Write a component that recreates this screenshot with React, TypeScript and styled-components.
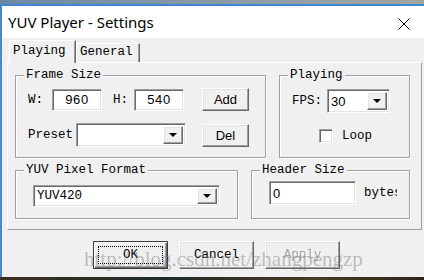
import React from "react";
import styled, { createGlobalStyle } from "styled-components";

const mono = `"Liberation Mono", "DejaVu Sans Mono", monospace`;
const sans = `"Liberation Sans", Arial, sans-serif`;

const Global = createGlobalStyle`
  html, body { margin: 0; padding: 0; }
  body { width: 424px; height: 280px; overflow: hidden; background: #2b2a22; }
`;

const Desktop = styled.div`
  position: relative;
  width: 424px;
  height: 280px;
  overflow: hidden;
  display: flex;
  flex-direction: column;
`;

const DesktopTop = styled.div`
  height: 4px;
  flex: none;
  background: linear-gradient(90deg, #6a88a6, #8c9ca8 55%, #a0a69e);
`;

const DesktopBottom = styled.div`
  height: 3px;
  flex: none;
  background: linear-gradient(90deg, #3a3122, #1f2926 40%, #4a3a22 75%, #2c2418);
`;

const Window = styled.div`
  box-sizing: border-box;
  width: 427px;
  height: 273px;
  flex: none;
  border-top: 2px solid #3f86cf;
  border-left: 2px solid #4d88c2;
  display: flex;
  flex-direction: column;
  background: #f0f0f0;
`;

const TitleBar = styled.div`
  height: 32px;
  flex: none;
  background: #fff;
  display: flex;
  align-items: center;
  justify-content: space-between;
`;

const Title = styled.span`
  padding-left: 6px;
  font: 15px "Noto Sans", "Open Sans", sans-serif;
  color: #000;
`;

const CloseBtn = styled.div`
  width: 46px;
  height: 32px;
  padding-top: 3px;
  box-sizing: border-box;
  display: flex;
  align-items: center;
  justify-content: center;
`;

const Client = styled.div`
  flex: 1;
  display: flex;
  flex-direction: column;
  padding: 2px 0 0 5px;
`;

const TabStrip = styled.div`
  display: flex;
  align-items: flex-end;
  height: 22px;
  padding-left: 2px;
  position: relative;
  z-index: 1;
`;

const Tab = styled.div<{ $active?: boolean; $w: number }>`
  box-sizing: border-box;
  width: ${(p) => p.$w}px;
  height: ${(p) => (p.$active ? 23 : 19)}px;
  margin-bottom: ${(p) => (p.$active ? -1 : 0)}px;
  background: #f0f0f0;
  border-top: 1px solid #fff;
  border-left: 1px solid #fff;
  border-right: 1px solid #696969;
  box-shadow: inset -1px 0 0 #a0a0a0;
  padding: ${(p) => (p.$active ? "2px" : "0")} 0 0 3px;
  font: 12.5px/16px ${mono};
  color: #000;
  white-space: nowrap;
`;

const Panel = styled.div`
  box-sizing: border-box;
  width: 415px;
  height: 168px;
  flex: none;
  border: 1px solid;
  border-color: #fff #a0a0a0 #a0a0a0 #fff;
  padding: 5px 0 0 7px;
  display: flex;
  flex-direction: column;
  gap: 5px;
`;

const GroupRow = styled.div`
  display: flex;
  gap: 13px;
`;

const Group = styled.fieldset<{ $w: number; $h: number }>`
  box-sizing: border-box;
  margin: 0;
  padding: 0;
  min-width: 0;
  width: ${(p) => p.$w}px;
  height: ${(p) => p.$h}px;
  border: 1px solid #a0a0a0;
  box-shadow: inset 1px 1px 0 #fff, 1px 1px 0 #fff;
`;

const Legend = styled.legend`
  padding: 0 2px;
  margin-left: 8px;
  font: 12.5px/14px ${mono};
  color: #000;
  background: #f0f0f0;
`;

const GroupBody = styled.div<{ $pt: number; $pl: number; $gap?: number }>`
  display: flex;
  flex-direction: column;
  padding: ${(p) => p.$pt}px 0 0 ${(p) => p.$pl}px;
  gap: ${(p) => p.$gap ?? 0}px;
`;

const Line = styled.div<{ $h: number; $pl?: number }>`
  display: flex;
  align-items: center;
  height: ${(p) => p.$h}px;
  padding-left: ${(p) => p.$pl ?? 0}px;
`;

const Label = styled.span<{ $w?: number; $ml?: number }>`
  flex: none;
  width: ${(p) => (p.$w ? `${p.$w}px` : "auto")};
  margin-left: ${(p) => p.$ml ?? 0}px;
  font: 12.5px/14px ${mono};
  color: #000;
  white-space: nowrap;
  overflow: hidden;
`;

const sunken = `
  box-sizing: border-box;
  background: #fff;
  border: 1px solid;
  border-color: #a0a0a0 #fff #fff #a0a0a0;
  box-shadow: inset 1px 1px 0 #696969, inset -1px -1px 0 #e3e3e3;
`;

const Edit = styled.div<{ $w: number; $h: number; $center?: boolean }>`
  ${sunken}
  flex: none;
  width: ${(p) => p.$w}px;
  height: ${(p) => p.$h}px;
  display: flex;
  align-items: center;
  justify-content: ${(p) => (p.$center ? "center" : "flex-start")};
  padding-left: ${(p) => (p.$center ? 0 : 3)}px;
  font: 13px ${sans};
  letter-spacing: 0.6px;
  color: #000;
`;

const Combo = styled.div<{ $w: number; $h: number }>`
  ${sunken}
  flex: none;
  width: ${(p) => p.$w}px;
  height: ${(p) => p.$h}px;
  display: flex;
  align-items: stretch;
  padding: 2px;
`;

const ComboText = styled.span<{ $mono?: boolean }>`
  flex: 1;
  display: flex;
  align-items: center;
  padding-left: 1px;
  font: ${(p) => (p.$mono ? `12.5px ${mono}` : `13px ${sans}`)};
  color: #000;
`;

const raised = `
  box-sizing: border-box;
  background: #f0f0f0;
  border: 1px solid;
  border-color: #fff #696969 #696969 #fff;
  box-shadow: inset -1px -1px 0 #a0a0a0, inset 1px 1px 0 #e3e3e3;
`;

const ComboArrow = styled.div`
  ${raised}
  flex: none;
  width: 20px;
  display: flex;
  align-items: center;
  justify-content: center;
`;

const Triangle = styled.span`
  width: 0;
  height: 0;
  border-left: 4px solid transparent;
  border-right: 4px solid transparent;
  border-top: 4px solid #000;
`;

const PushButton = styled.div<{ $w: number; $h: number; $ml?: number }>`
  ${raised}
  flex: none;
  width: ${(p) => p.$w}px;
  height: ${(p) => p.$h}px;
  margin-left: ${(p) => p.$ml ?? 0}px;
  display: flex;
  align-items: center;
  justify-content: center;
  font: 13px ${sans};
  color: #000;
`;

const CheckBox = styled.div`
  ${sunken}
  flex: none;
  width: 14px;
  height: 14px;
`;

const ButtonRow = styled.div`
  display: flex;
  gap: 11px;
  margin-top: 11px;
  padding-left: 86px;
`;

const DialogButton = styled.div<{ $default?: boolean; $disabled?: boolean }>`
  box-sizing: border-box;
  width: 75px;
  height: 28px;
  background: #f0f0f0;
  border: 1px solid;
  border-color: ${(p) => (p.$default ? "#3c3c3c" : "#fff #696969 #696969 #fff")};
  box-shadow: ${(p) =>
    p.$default
      ? "inset 1px 1px 0 #fff, inset -1px -1px 0 #696969, inset -2px -2px 0 #a0a0a0"
      : "inset -1px -1px 0 #a0a0a0, inset 1px 1px 0 #e3e3e3"};
  display: flex;
  align-items: center;
  justify-content: center;
  padding: 4px;
  font: 12.5px/14px ${mono};
  color: ${(p) => (p.$disabled ? "#a0a0a0" : "#000")};
  text-shadow: ${(p) => (p.$disabled ? "1px 1px 0 #fff" : "none")};
`;

const FocusRect = styled.span`
  flex: 1;
  align-self: stretch;
  display: flex;
  align-items: center;
  justify-content: center;
  border: 1px dotted #000;
`;

const Watermark = styled.div`
  position: absolute;
  left: 84px;
  top: 247px;
  font: 21px "Liberation Serif", "Times New Roman", serif;
  color: rgba(110, 110, 110, 0.42);
  white-space: nowrap;
  pointer-events: none;
`;

export default function App() {
  return (
    <>
      <Global />
      <Desktop>
        <DesktopTop />
        <Window>
          <TitleBar>
            <Title>YUV Player - Settings</Title>
            <CloseBtn>
              <svg width="12" height="12" viewBox="0 0 12 12">
                <path d="M0.5 0.5 L11.5 11.5 M11.5 0.5 L0.5 11.5" stroke="#000" strokeWidth="1" fill="none" />
              </svg>
            </CloseBtn>
          </TitleBar>
          <Client>
            <TabStrip>
              <Tab $active $w={67}>Playing</Tab>
              <Tab $w={64}>General</Tab>
            </TabStrip>
            <Panel>
              <GroupRow>
                <Group $w={251} $h={90}>
                  <Legend>Frame Size</Legend>
                  <GroupBody $pt={6} $pl={12} $gap={12}>
                    <Line $h={23}>
                      <Label $w={24}>W:</Label>
                      <Edit $w={50} $h={22} $center>960</Edit>
                      <Label $w={21} $ml={11}>H:</Label>
                      <Edit $w={50} $h={22} $center>540</Edit>
                      <PushButton $w={47} $h={23} $ml={18}>Add</PushButton>
                    </Line>
                    <Line $h={24}>
                      <Label $w={48}>Preset</Label>
                      <Combo $w={110} $h={24}>
                        <ComboText />
                        <ComboArrow><Triangle /></ComboArrow>
                      </Combo>
                      <PushButton $w={47} $h={23} $ml={16}>Del</PushButton>
                    </Line>
                  </GroupBody>
                </Group>
                <Group $w={131} $h={90}>
                  <Legend>Playing</Legend>
                  <GroupBody $pt={7} $pl={12} $gap={16}>
                    <Line $h={24}>
                      <Label $w={35}>FPS:</Label>
                      <Combo $w={63} $h={24}>
                        <ComboText>30</ComboText>
                        <ComboArrow><Triangle /></ComboArrow>
                      </Combo>
                    </Line>
                    <Line $h={14} $pl={27}>
                      <CheckBox />
                      <Label $ml={9}>Loop</Label>
                    </Line>
                  </GroupBody>
                </Group>
              </GroupRow>
              <GroupRow>
                <Group $w={223} $h={56}>
                  <Legend>YUV Pixel Format</Legend>
                  <GroupBody $pt={8} $pl={17}>
                    <Line $h={22}>
                      <Combo $w={187} $h={22}>
                        <ComboText $mono>YUV420</ComboText>
                        <ComboArrow><Triangle /></ComboArrow>
                      </Combo>
                    </Line>
                  </GroupBody>
                </Group>
                <Group $w={159} $h={56}>
                  <Legend>Header Size</Legend>
                  <GroupBody $pt={4} $pl={17}>
                    <Line $h={24}>
                      <Edit $w={87} $h={24}>0</Edit>
                      <Label $w={33} $ml={8}>bytes</Label>
                    </Line>
                  </GroupBody>
                </Group>
              </GroupRow>
            </Panel>
            <ButtonRow>
              <DialogButton $default>
                <FocusRect>OK</FocusRect>
              </DialogButton>
              <DialogButton>Cancel</DialogButton>
              <DialogButton $disabled>Apply</DialogButton>
            </ButtonRow>
          </Client>
        </Window>
        <DesktopBottom />
        <Watermark>http://blog.csdn.net/zhangpengzp</Watermark>
      </Desktop>
    </>
  );
}
